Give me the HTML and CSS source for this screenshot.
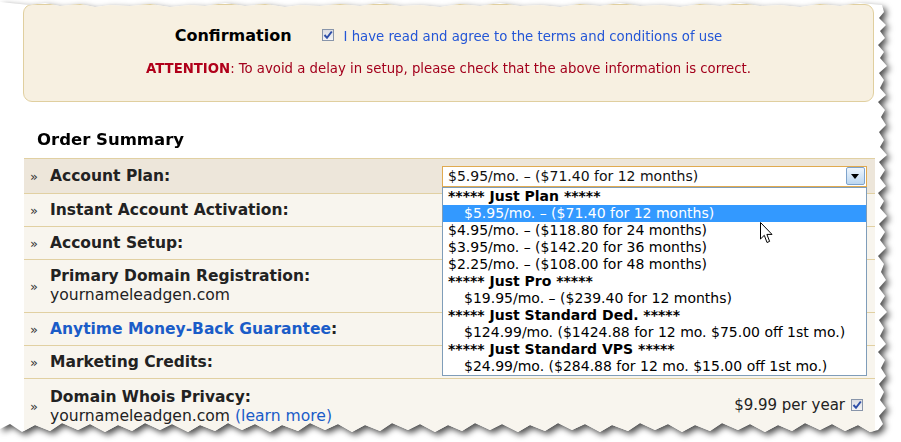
FILE: index.html
```html
<!DOCTYPE html>
<html>
<head>
<meta charset="utf-8">
<link rel="stylesheet" href="styles.css">
</head>
<body>
<div class="frame">
  <div class="paper">
    <div class="confirm">
      <div class="confirm-row">
        <span class="confirm-title">Confirmation</span>
        <label class="agree">
          <span class="cb"><svg width="10" height="10" viewBox="0 0 10 10"><path d="M1.5 5 L4 7.8 L8.8 1.5" fill="none" stroke="#2f4fa8" stroke-width="2"/></svg></span>
          <span class="agree-text">I have read and agree to the terms and conditions of use</span>
        </label>
      </div>
      <p class="attention"><b>ATTENTION</b>: To avoid a delay in setup, please check that the above information is correct.</p>
    </div>

    <h2 class="summary-title">Order Summary</h2>

    <div class="summary">
      <div class="row row-plan">
        <span class="bullet">»</span>
        <div class="label"><b>Account Plan:</b></div>
        <div class="select">
          <span class="select-text">$5.95/mo. – ($71.40 for 12 months)</span>
          <span class="arrow"></span>
          <div class="list">
            <div class="opt h">***** Just Plan *****</div>
            <div class="opt in sel">$5.95/mo. – ($71.40 for 12 months)</div>
            <div class="opt">$4.95/mo. – ($118.80 for 24 months)</div>
            <div class="opt">$3.95/mo. – ($142.20 for 36 months)</div>
            <div class="opt">$2.25/mo. – ($108.00 for 48 months)</div>
            <div class="opt h">***** Just Pro *****</div>
            <div class="opt in">$19.95/mo. – ($239.40 for 12 months)</div>
            <div class="opt h">***** Just Standard Ded. *****</div>
            <div class="opt in">$124.99/mo. ($1424.88 for 12 mo. $75.00 off 1st mo.)</div>
            <div class="opt h">***** Just Standard VPS *****</div>
            <div class="opt in">$24.99/mo. ($284.88 for 12 mo. $15.00 off 1st mo.)</div>
            <svg class="cursor" width="13" height="22" viewBox="0 0 13 22"><path d="M0.5 0.5 L0.5 17 L4.3 13.3 L7 20.5 L9.6 19.4 L6.9 12.4 L12 12.4 Z" fill="#fff" stroke="#000" stroke-width="1" stroke-linejoin="miter"/></svg>
          </div>
        </div>
      </div>
      <div class="row">
        <span class="bullet">»</span>
        <div class="label"><b>Instant Account Activation:</b></div>
      </div>
      <div class="row">
        <span class="bullet">»</span>
        <div class="label"><b>Account Setup:</b></div>
      </div>
      <div class="row row-tall">
        <span class="bullet">»</span>
        <div class="label"><b>Primary Domain Registration:</b><br>yournameleadgen.com</div>
      </div>
      <div class="row">
        <span class="bullet">»</span>
        <div class="label"><b><span class="link">Anytime Money-Back Guarantee</span>:</b></div>
      </div>
      <div class="row">
        <span class="bullet">»</span>
        <div class="label"><b>Marketing Credits:</b></div>
      </div>
      <div class="row row-last">
        <span class="bullet">»</span>
        <div class="label"><b>Domain Whois Privacy:</b><br>yournameleadgen.com <span class="link">(learn more)</span></div>
        <div class="price">
          <span>$9.99 per year</span>
          <span class="cb"><svg width="10" height="10" viewBox="0 0 10 10"><path d="M1.5 5 L4 7.8 L8.8 1.5" fill="none" stroke="#2f4fa8" stroke-width="2"/></svg></span>
        </div>
      </div>
    </div>
  </div>
</div>
</body>
</html>
```
FILE: styles.css
```css
* { box-sizing: border-box; }

body {
  margin: 0;
  background: #fff;
  font-family: "DejaVu Sans", Verdana, sans-serif;
  color: #222;
}

.frame {
  width: 901px;
  height: 442px;
  filter: drop-shadow(3px 3px 3px rgba(0, 0, 0, 0.7));
}

.paper {
  width: 892px;
  height: 438px;
  background: #fff;
  padding: 4px 0 0 23px;
  clip-path: polygon(0 2px, 30px 5px, 45px 3px, 60px 6px, 80px 4px, 95px 7px, 110px 5px, 130px 6px, 150px 4px, 170px 7px, 190px 5px, 205px 6px, 225px 3px, 245px 6px, 265px 4px, 285px 7px, 300px 5px, 320px 6px, 340px 4px, 360px 6px, 380px 3px, 400px 6px, 420px 5px, 440px 7px, 460px 4px, 480px 6px, 500px 3px, 520px 6px, 540px 5px, 560px 7px, 580px 4px, 600px 6px, 620px 3px, 640px 6px, 660px 5px, 680px 7px, 700px 4px, 720px 6px, 740px 3px, 760px 6px, 780px 5px, 800px 7px, 820px 4px, 840px 6px, 860px 3px, 882px 5px,
    884px 12px, 879px 18px, 886px 25px, 880px 31px, 885px 38px, 878px 45px, 884px 52px, 880px 58px, 887px 66px, 879px 73px, 884px 80px, 880px 88px, 886px 95px, 878px 102px, 885px 110px, 881px 117px, 886px 125px, 879px 132px, 884px 140px, 880px 147px, 887px 155px, 879px 162px, 885px 170px, 880px 178px, 886px 186px, 878px 193px, 884px 201px, 880px 208px, 887px 216px, 879px 224px, 885px 232px, 880px 240px, 886px 248px, 878px 256px, 884px 264px, 881px 272px, 886px 280px, 879px 288px, 885px 296px, 880px 304px, 887px 312px, 879px 320px, 884px 328px, 880px 336px, 886px 344px, 878px 352px, 885px 360px, 881px 368px, 886px 376px, 879px 384px, 884px 392px, 880px 400px, 886px 408px, 879px 416px, 883px 424px, 878px 430px,
    870px 432px, 858px 425px, 845px 431px, 832px 424px, 820px 430px, 805px 423px, 792px 431px, 778px 425px, 765px 432px, 750px 424px, 738px 430px, 722px 423px, 710px 431px, 695px 425px, 682px 432px, 668px 424px, 655px 430px, 640px 423px, 628px 431px, 612px 425px, 600px 432px, 585px 424px, 572px 430px, 558px 423px, 545px 431px, 530px 425px, 518px 432px, 502px 424px, 490px 430px, 475px 423px, 462px 431px, 448px 425px, 435px 432px, 420px 424px, 408px 430px, 392px 423px, 380px 431px, 365px 425px, 352px 432px, 338px 424px, 325px 430px, 310px 423px, 298px 431px, 282px 425px, 270px 432px, 255px 424px, 242px 430px, 228px 423px, 215px 431px, 200px 425px, 188px 432px, 172px 424px, 160px 430px, 145px 423px, 132px 431px, 118px 425px, 105px 432px, 90px 424px, 78px 430px, 62px 423px, 50px 431px, 35px 425px, 22px 432px, 10px 424px, 0 429px);
}

/* Confirmation box */
.confirm {
  width: 851px;
  height: 98px;
  border: 1px solid #e0cf9f;
  border-radius: 9px;
  background: #f7f0e1;
  padding-top: 19px;
  text-align: center;
}

.confirm-row {
  display: flex;
  justify-content: center;
  align-items: center;
  height: 22px;
}

.confirm-title {
  font-weight: bold;
  font-size: 16px;
  color: #000;
  margin-right: 30px;
}

.agree {
  display: flex;
  align-items: center;
  gap: 10px;
}

.agree-text {
  font-family: "DejaVu Sans Condensed", "DejaVu Sans", sans-serif;
  font-stretch: condensed;
  font-size: 14.75px;
  color: #2456d6;
}

.attention {
  margin: 12px 0 0;
  line-height: 20px;
  font-family: "DejaVu Sans Condensed", "DejaVu Sans", sans-serif;
  font-stretch: condensed;
  font-size: 14.75px;
  color: #a3001c;
}

.attention b {
  color: #b0001a;
}

.cb {
  display: inline-flex;
  align-items: center;
  justify-content: center;
  width: 12px;
  height: 12px;
  border: 1px solid #8895aa;
  background: linear-gradient(#dcdde2, #f4f4f6);
}

/* Order summary */
.summary-title {
  margin: 28px 0 8px 14px;
  font-size: 16.5px;
  line-height: 20px;
  font-weight: bold;
  color: #000;
}

.summary {
  position: relative;
  width: 851px;
  margin-left: 1px;
}

.row {
  display: flex;
  align-items: center;
  height: 33px;
  border-top: 1px solid #e1d0a2;
  background: #f8f5ee;
  padding-right: 8px;
}

.row-plan {
  height: 35px;
  background: #ede6da;
}

.row-tall { height: 53px; }

.row-last {
  height: 56px;
  padding-right: 12px;
}

.bullet {
  width: 26px;
  padding-left: 6px;
  font-size: 13px;
  color: #333;
}

.label {
  flex: 1;
  font-size: 15.6px;
  line-height: 19px;
  color: #222;
}

.label b {
  font-size: 15.5px;
}

.link { color: #1a5cc8; }

/* Fake select */
.select {
  position: relative;
  width: 425px;
  height: 21px;
  border: 1px solid #e0aa50;
  background: #fff;
  font-size: 14px;
  line-height: 19px;
  padding-left: 5px;
  color: #111;
  white-space: nowrap;
}

.arrow {
  position: absolute;
  right: 1px;
  top: 0;
  width: 19px;
  height: 18px;
  border: 1px solid #7ea3cc;
  border-radius: 2px;
  background: linear-gradient(#eef5fc, #bcd7f1);
}

.arrow::after {
  content: "";
  position: absolute;
  left: 4px;
  top: 6px;
  border-left: 4.5px solid transparent;
  border-right: 4.5px solid transparent;
  border-top: 5px solid #000;
}

.list {
  position: absolute;
  left: -1px;
  top: 20px;
  width: 425px;
  border: 1px solid #7f9db9;
  background: #fff;
  z-index: 5;
}

.opt {
  height: 17px;
  line-height: 17px;
  padding-left: 5px;
  font-size: 14px;
  color: #000;
  white-space: nowrap;
}

.opt.h { font-weight: bold; }
.opt.in { padding-left: 21px; }
.opt.sel { background: #3399ff; color: #fff; }

.cursor {
  position: absolute;
  left: 317px;
  top: 34px;
}

.price {
  display: flex;
  align-items: center;
  gap: 6px;
  font-size: 15px;
  color: #222;
  margin-top: -4px;
}
```
